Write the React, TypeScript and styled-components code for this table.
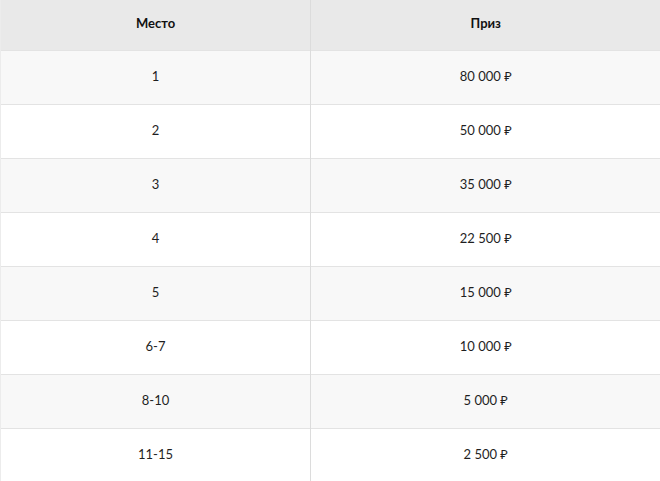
import React, { FC } from "react";
import styled, { createGlobalStyle } from "styled-components";

const GlobalStyle = createGlobalStyle`
    html, body {
        margin: 0;
        padding: 0;
        background: #ffffff;
    }
    body {
        font-family: Lato, "Noto Sans", "Liberation Sans", sans-serif;
        color: #1f1f1f;
    }
`

const Table = styled.table`
    width: 660px;
    border-collapse: collapse;
    table-layout: fixed;
    font-size: 13px;
    line-height: 16px;
`

const HeadCell = styled.th`
    height: 46px;
    padding: 0 0 4px;
    background: #e9e9e9;
    font-weight: 700;
    color: #111;
    text-align: center;
    border-right: 1px solid #dcdcdc;
    border-left: 1px solid #ececec;

    &:last-child {
        border-right: none;
    }
`

const Row = styled.tr<{ $shaded: boolean }>`
    background: ${({ $shaded }) => ($shaded ? "#f8f8f8" : "#ffffff")};
    border-top: 1px solid #e3e3e3;
`

const Cell = styled.td`
    height: 50px;
    padding: 0 0 3px;
    text-align: center;
    border-right: 1px solid #dcdcdc;
    border-left: 1px solid #ececec;

    &:last-child {
        border-right: none;
    }
`

const prizes: [string, string][] = [
    ["1", "80 000 ₽"],
    ["2", "50 000 ₽"],
    ["3", "35 000 ₽"],
    ["4", "22 500 ₽"],
    ["5", "15 000 ₽"],
    ["6-7", "10 000 ₽"],
    ["8-10", "5 000 ₽"],
    ["11-15", "2 500 ₽"],
]

const App: FC = () => {
    return (
        <>
            <GlobalStyle />
            <Table>
                <colgroup>
                    <col style={{ width: 310 }} />
                    <col style={{ width: 350 }} />
                </colgroup>
                <thead>
                    <tr>
                        <HeadCell>Место</HeadCell>
                        <HeadCell>Приз</HeadCell>
                    </tr>
                </thead>
                <tbody>
                    {prizes.map(([place, prize], i) => (
                        <Row key={place} $shaded={i % 2 === 0}>
                            <Cell>{place}</Cell>
                            <Cell>{prize}</Cell>
                        </Row>
                    ))}
                </tbody>
            </Table>
        </>
    )
}

export default App
